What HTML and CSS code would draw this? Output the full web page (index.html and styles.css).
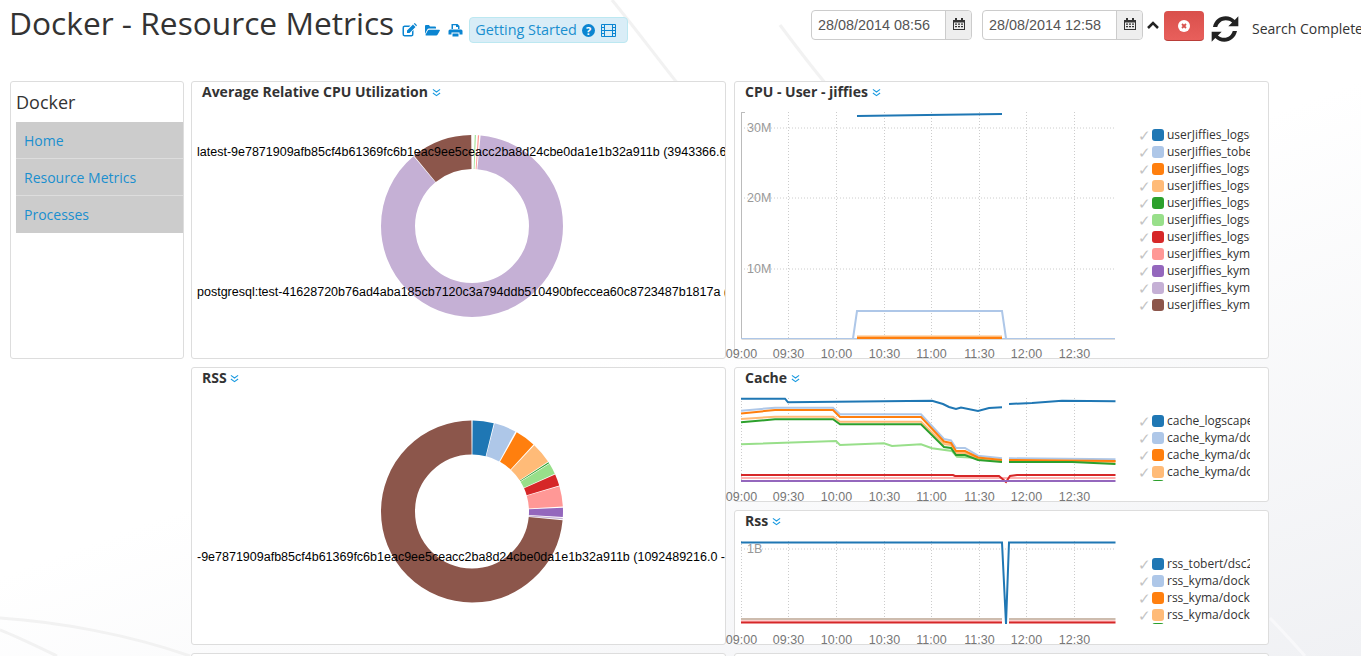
FILE: index.html
```html
<!DOCTYPE html>
<html lang="en">
<head>
    <meta charset="UTF-8">
    <title>Docker - Resource Metrics</title>
    <link rel="stylesheet" href="styles.css">
</head>
<body>
    <svg class="backdrop" viewBox="0 0 1361 656" aria-hidden="true">
        <path d="M612 0 C635 28 655 55 678 84" class="streak"/>
        <path d="M780 25 C795 45 810 65 826 84" class="streak"/>
        <path d="M0 618 C60 622 130 635 190 656" class="streak"/>
        <path d="M0 630 C20 638 40 648 57 656" class="streak"/>
        <path d="M1270 618 C1282 630 1293 643 1305 656" class="streak light"/>
    </svg>

    <header class="top-bar">
        <div class="title-group">
            <h1>Docker - Resource Metrics</h1>
            <div class="title-icons">
                <svg class="icon" viewBox="0 0 15 14"><path d="M2.500 2.500H8.500L7 4H3A.8.8 0 0 0 2 5V11A.8.8 0 0 0 3 12H9A.8.8 0 0 0 10 11V8.500L11.500 7V11A2.200 2.200 0 0 1 9.500 13.500H2.500A2.200 2.200 0 0 1 .5 11V5A2.200 2.200 0 0 1 2.500 2.500Z"/><path d="M5 7.500 11 1.500 13.500 4 7.500 10H5ZM11.800.8 12.800 0 15 2.200 14.200 3.200Z"/></svg>
                <svg class="icon" viewBox="0 0 15 14"><path d="M0 11V3A1 1 0 0 1 1 2H4L5 3.500H10A1 1 0 0 1 11 4.500V5.500H4A2 2 0 0 0 2.300 6.500Z"/><path d="M4 6.700H14.200A.7.7 0 0 1 14.800 7.700L12.500 11.800A1.500 1.500 0 0 1 11 12.500H1A.6.6 0 0 1 .5 11.700L2.800 7.500A1.400 1.400 0 0 1 4 6.700Z"/></svg>
                <svg class="icon" viewBox="0 0 15 14"><path d="M3.500 1H9.500L11.500 3V6H10V4H8V2.300H5V6H3.500Z"/><path d="M2 6.500H13A1.500 1.500 0 0 1 14.500 8V11.500H11.500V9.500H3.500V11.500H.5V8A1.500 1.500 0 0 1 2 6.500Z"/><path d="M4.500 10.500H10.500V13.500H4.500Z"/></svg>
            </div>
            <div class="getting-started">
                Getting Started
                <svg class="icon-help" viewBox="0 0 13 13"><circle cx="6.500" cy="6.500" r="6.500"/><text x="6.500" y="10.500">?</text></svg>
                <svg class="icon-film" viewBox="0 0 15 13"><path d="M.5.500h14v12H.5zM3.500.500v12M11.500.500v12M3.500 6.500h8M.5 3.500h3M.5 6.500h3M.5 9.500h3M11.500 3.500h3M11.500 6.500h3M11.500 9.500h3"/></svg>
            </div>
        </div>
        <div class="search-group">
            <div class="date-field">
                <span class="date-value">28/08/2014 08:56</span>
                <span class="date-addon"><svg class="icon-cal" viewBox="0 0 12 12"><path d="M0 2h2V0h2v2h4V0h2v2h2v10H0zM1 4.500V11h10V4.500z"/><path d="M2 5.500h2v1.300H2zM5 5.500h2v1.300H5zM8 5.500h2v1.300H8zM2 8h2v1.300H2zM5 8h2v1.300H5zM8 8h2v1.300H8z"/></svg></span>
            </div>
            <div class="date-field">
                <span class="date-value">28/08/2014 12:58</span>
                <span class="date-addon"><svg class="icon-cal" viewBox="0 0 12 12"><path d="M0 2h2V0h2v2h4V0h2v2h2v10H0zM1 4.500V11h10V4.500z"/><path d="M2 5.500h2v1.300H2zM5 5.500h2v1.300H5zM8 5.500h2v1.300H8zM2 8h2v1.300H2zM5 8h2v1.300H5zM8 8h2v1.300H8z"/></svg></span>
            </div>
            <svg class="icon-up" viewBox="0 0 12 8"><path d="M1 7 6 2l5 5" /></svg>
            <button class="stop-btn"><svg viewBox="0 0 12 12"><circle cx="6" cy="6" r="6" fill="#fff"/><path d="M4 4l4 4M8 4l-4 4" stroke="#d9534f" stroke-width="1.800"/></svg></button>
            <svg class="icon-refresh" viewBox="0 0 24 24"><path d="M3 10.500C4 5.500 8 2.500 12.500 2.500c2.800 0 5 1 6.800 2.800L22 2.500V10h-7.500l2.800-2.800C16 6 14.500 5.400 12.500 5.400 9.500 5.400 7 7.500 6.200 10.500zM21 13.500c-1 5-5 8-9.500 8-2.800 0-5-1-6.800-2.800L2 21.500V14h7.500l-2.800 2.800c1.300 1.200 2.800 1.800 4.800 1.800 3 0 5.500-2.100 6.300-5.100z"/></svg>
            <span class="search-status">Search Complete</span>
        </div>
    </header>

    <main class="layout">
        <nav class="side-nav">
            <h3>Docker</h3>
            <ul>
                <li><a href="#">Home</a></li>
                <li><a href="#">Resource Metrics</a></li>
                <li><a href="#">Processes</a></li>
            </ul>
        </nav>

        <div class="panels">
            <section class="panel tall">
                <h4>Average Relative CPU Utilization <svg class="icon-more" viewBox="0 0 10 10"><path d="M1 1.500l4 3 4-3M1 5.500l4 3 4-3"/></svg></h4>
                <svg class="pie" viewBox="0 0 533 250">
                    <g class="ring" transform="rotate(-90 280 119)">
                        <circle cx="280" cy="119" r="74" pathLength="360" stroke="#c5b0d5" stroke-dasharray="314.500 360" stroke-dashoffset="-5.500"/>
                        <circle cx="280" cy="119" r="74" pathLength="360" stroke="#8c564b" stroke-dasharray="39 360" stroke-dashoffset="-320.500"/>
                        <circle cx="280" cy="119" r="74" pathLength="360" stroke="#98df8a" stroke-dasharray="0.700 360" stroke-dashoffset="-1.800"/>
                        <circle cx="280" cy="119" r="74" pathLength="360" stroke="#ff9896" stroke-dasharray="0.800 360" stroke-dashoffset="-3.800"/>
                    </g>
                    <text x="5" y="49" class="pie-label">latest-9e7871909afb85cf4b61369fc6b1eac9ee5ceacc2ba8d24cbe0da1e1b32a911b (3943366.6</text>
                    <text x="5" y="189" class="pie-label">postgresql:test-41628720b76ad4aba185cb7120c3a794ddb510490bfeccea60c8723487b1817a (</text>
                </svg>
            </section>

            <section class="panel tall">
                <h4>CPU - User - jiffies <svg class="icon-more" viewBox="0 0 10 10"><path d="M1 1.500l4 3 4-3M1 5.500l4 3 4-3"/></svg></h4>
                <div class="chart-row">
                    <svg class="chart" viewBox="0 0 395 254">
                        <g class="grid">
                            <path d="M14.500 0V227M61.500 0V227M109.500 0V227M157.500 0V227M204.500 0V227M252.500 0V227M299.500 0V227M347.500 0V227"/>
                            <path d="M14 16H388M14 86H388M14 157H388"/>
                        </g>
                        <path class="axis" d="M18 .5H14.500V227H388"/>
                        <text x="20" y="20" class="tick">30M</text>
                        <text x="20" y="90" class="tick">20M</text>
                        <text x="20" y="161" class="tick">10M</text>
                        <path class="line thin" stroke="#aec7e8" d="M14 226.500H388"/>
                        <path class="line" stroke="#aec7e8" d="M126 226.500 130 199H275L279 226.500"/>
                        <path class="line" stroke="#ffbb78" d="M130 224.500H275"/>
                        <path class="line" stroke="#ff7f0e" d="M130 226H275"/>
                        <path class="line" stroke="#1f77b4" d="M130 4L200 3L275 2"/>
                        <g class="ticks-x">
                            <text x="14.500" y="246">09:00</text><text x="61.500" y="246">09:30</text><text x="109.500" y="246">10:00</text><text x="157.500" y="246">10:30</text><text x="204.500" y="246">11:00</text><text x="252.500" y="246">11:30</text><text x="299.500" y="246">12:00</text><text x="347.500" y="246">12:30</text>
                        </g>
                    </svg>
                    <ul class="legend">
                        <li><i>✓</i><b class="c1"></b><span>userJiffies_logscape</span></li>
                        <li><i>✓</i><b class="c2"></b><span>userJiffies_tobert</span></li>
                        <li><i>✓</i><b class="c3"></b><span>userJiffies_logscape</span></li>
                        <li><i>✓</i><b class="c4"></b><span>userJiffies_logscape</span></li>
                        <li><i>✓</i><b class="c5"></b><span>userJiffies_logscape</span></li>
                        <li><i>✓</i><b class="c6"></b><span>userJiffies_logscape</span></li>
                        <li><i>✓</i><b class="c7"></b><span>userJiffies_logscape</span></li>
                        <li><i>✓</i><b class="c8"></b><span>userJiffies_kyma/docker</span></li>
                        <li><i>✓</i><b class="c9"></b><span>userJiffies_kyma/docker</span></li>
                        <li><i>✓</i><b class="c10"></b><span>userJiffies_kyma/docker</span></li>
                        <li><i>✓</i><b class="c11"></b><span>userJiffies_kyma/docker</span></li>
                    </ul>
                </div>
            </section>

            <section class="panel tall">
                <h4>RSS <svg class="icon-more" viewBox="0 0 10 10"><path d="M1 1.500l4 3 4-3M1 5.500l4 3 4-3"/></svg></h4>
                <svg class="pie" viewBox="0 0 533 250">
                    <g class="ring" transform="rotate(-90 280 118.500)">
                        <circle cx="280" cy="118.500" r="74" pathLength="360" stroke="#1f77b4" stroke-dasharray="13.500 360" stroke-dashoffset="-.4"/>
                        <circle cx="280" cy="118.500" r="74" pathLength="360" stroke="#aec7e8" stroke-dasharray="14 360" stroke-dashoffset="-14.500"/>
                        <circle cx="280" cy="118.500" r="74" pathLength="360" stroke="#ff7f0e" stroke-dasharray="13 360" stroke-dashoffset="-29.500"/>
                        <circle cx="280" cy="118.500" r="74" pathLength="360" stroke="#ffbb78" stroke-dasharray="13.500 360" stroke-dashoffset="-43.200"/>
                        <circle cx="280" cy="118.500" r="74" pathLength="360" stroke="#2ca02c" stroke-dasharray=".7 360" stroke-dashoffset="-57.200"/>
                        <circle cx="280" cy="118.500" r="74" pathLength="360" stroke="#98df8a" stroke-dasharray="7 360" stroke-dashoffset="-58.400"/>
                        <circle cx="280" cy="118.500" r="74" pathLength="360" stroke="#d62728" stroke-dasharray="7.300 360" stroke-dashoffset="-66"/>
                        <circle cx="280" cy="118.500" r="74" pathLength="360" stroke="#ff9896" stroke-dasharray="13 360" stroke-dashoffset="-73.800"/>
                        <circle cx="280" cy="118.500" r="74" pathLength="360" stroke="#9467bd" stroke-dasharray="6 360" stroke-dashoffset="-87.600"/>
                        <circle cx="280" cy="118.500" r="74" pathLength="360" stroke="#c5b0d5" stroke-dasharray=".8 360" stroke-dashoffset="-94.200"/>
                        <circle cx="280" cy="118.500" r="74" pathLength="360" stroke="#8c564b" stroke-dasharray="264 360" stroke-dashoffset="-95.600"/>
                    </g>
                    <text x="5" y="168" class="pie-label">-9e7871909afb85cf4b61369fc6b1eac9ee5ceacc2ba8d24cbe0da1e1b32a911b (1092489216.0 -</text>
                </svg>
            </section>

            <div class="panel-stack">
                <section class="panel short">
                    <h4>Cache <svg class="icon-more" viewBox="0 0 10 10"><path d="M1 1.500l4 3 4-3M1 5.500l4 3 4-3"/></svg></h4>
                    <div class="chart-row">
                        <svg class="chart" viewBox="0 0 395 111">
                            <g class="grid"><path d="M14.500 0V83M61.500 0V83M109.500 0V83M157.500 0V83M204.500 0V83M252.500 0V83M299.500 0V83M347.500 0V83"/></g>
                            <path class="line" stroke="#ffb3b2" stroke-width="4" d="M14 80H388.500"/>
                            <path class="line" stroke="#d62728" d="M14 77H226L228 78H272L279 84 283 78 290 77H388.500"/>
                            <path class="line" stroke="#9467bd" d="M14 83H388.500"/>
                            <path class="line" stroke="#98df8a" d="M14 46.300 109 43 113 47 157 45.300 165 48 194 46.300 205 50.300 225 53 230 58.700 251 60 275 63M282 63H388.500"/>
                            <path class="line" stroke="#aec7e8" stroke-width="3" d="M14 12.700 48 9.700H106L113 16.300H194L217 41 224 42.300 229 50H238L251 57.700 275 60.300M282 60.300 388.500 61.300"/>
                            <path class="line" stroke="#ffbb78" stroke-width="3" d="M14 21 48 18.700H106L113 23.700H194L217 46 224 47 229 55H238L251 61 275 63M282 63 388.500 64"/>
                            <path class="line" stroke="#ff7f0e" d="M14 15.500 48 12H106L113 19H194L217 43.500 224 45 229 53H238L251 59.500 275 62M282 62 388.500 63"/>
                            <path class="line" stroke="#2ca02c" d="M14 24.300 48 21.300H106L113 26.300H194L217 49 224 50 229 57H238L251 62 275 64M282 64H345L388.500 66"/>
                            <path class="line" stroke="#1f77b4" d="M14 .7H58L61 4.300 205 2.700 216 6 222 9 229 11 234 9.500 251 13 262 10 275 9.300M282 6 305 5 335 2.700 388.500 3.300"/>
                            <g class="ticks-x">
                                <text x="14.500" y="103">09:00</text><text x="61.500" y="103">09:30</text><text x="109.500" y="103">10:00</text><text x="157.500" y="103">10:30</text><text x="204.500" y="103">11:00</text><text x="252.500" y="103">11:30</text><text x="299.500" y="103">12:00</text><text x="347.500" y="103">12:30</text>
                            </g>
                        </svg>
                        <ul class="legend legend-short">
                            <li><i>✓</i><b class="c1"></b><span>cache_logscape/docker</span></li>
                            <li><i>✓</i><b class="c2"></b><span>cache_kyma/docker</span></li>
                            <li><i>✓</i><b class="c3"></b><span>cache_kyma/docker</span></li>
                            <li><i>✓</i><b class="c4"></b><span>cache_kyma/docker</span></li>
                            <li><i></i><b class="c5"></b><span></span></li>
                        </ul>
                    </div>
                </section>

                <section class="panel short">
                    <h4>Rss <svg class="icon-more" viewBox="0 0 10 10"><path d="M1 1.500l4 3 4-3M1 5.500l4 3 4-3"/></svg></h4>
                    <div class="chart-row">
                        <svg class="chart" viewBox="0 0 395 111">
                            <g class="grid"><path d="M14.500 0V83M61.500 0V83M109.500 0V83M157.500 0V83M204.500 0V83M252.500 0V83M299.500 0V83M347.500 0V83"/><path d="M14 8H388"/></g>
                            <text x="20" y="12" class="tick">1B</text>
                            <path class="line" stroke="#cdbcae" d="M14 78H275M282 78H388.500"/>
                            <path class="line thin" stroke="#ff9896" d="M14 80H275M282 80H388.500"/>
                            <path class="line" stroke="#d62728" d="M14 81.500H275M282 81.500H388.500"/>
                            <path class="line" stroke="#1f77b4" d="M14 1.500H275L279 83 282 1.500H388.500"/>
                            <g class="ticks-x">
                                <text x="14.500" y="103">09:00</text><text x="61.500" y="103">09:30</text><text x="109.500" y="103">10:00</text><text x="157.500" y="103">10:30</text><text x="204.500" y="103">11:00</text><text x="252.500" y="103">11:30</text><text x="299.500" y="103">12:00</text><text x="347.500" y="103">12:30</text>
                            </g>
                        </svg>
                        <ul class="legend legend-short">
                            <li><i>✓</i><b class="c1"></b><span>rss_tobert/dsc2</span></li>
                            <li><i>✓</i><b class="c2"></b><span>rss_kyma/docker</span></li>
                            <li><i>✓</i><b class="c3"></b><span>rss_kyma/docker</span></li>
                            <li><i>✓</i><b class="c4"></b><span>rss_kyma/docker</span></li>
                            <li><i></i><b class="c5"></b><span></span></li>
                        </ul>
                    </div>
                </section>
            </div>

            <section class="panel tall"></section>
            <section class="panel tall"></section>
        </div>
    </main>
</body>
</html>
```

FILE: styles.css
```css
/* page */
html, body {
    height: 100%;
    overflow: hidden;
}

body {
    margin: 0;
    background: linear-gradient(160deg, #fff 50%, #f0f1f4 100%);
    color: #333;
    font-family: "Open Sans", sans-serif;
    font-size: 14px;
}

.backdrop {
    position: absolute;
    top: 0;
    left: 0;
    width: 1361px;
    height: 656px;
    z-index: -1;
}

.streak {
    fill: none;
    stroke: #f2f2f2;
    stroke-width: 3;
}

.streak.light {
    stroke: #f8f8fa;
}

/* header */
.top-bar {
    display: flex;
    justify-content: space-between;
    height: 81px;
    white-space: nowrap;
}

.title-group {
    display: flex;
    align-items: flex-start;
    padding-left: 9px;
}

h1 {
    margin: 2px 0 0;
    font-size: 31.7px;
    font-weight: 400;
    line-height: 42px;
}

.title-icons {
    display: flex;
    gap: 8px;
    margin: 23px 0 0 8px;
}

.icon {
    width: 15px;
    height: 14px;
    fill: #0b85d1;
}

.getting-started {
    display: flex;
    align-items: center;
    height: 22px;
    margin: 17px 0 0 6px;
    padding: 0 11px 2px 5px;
    border: 1px solid #bce8f1;
    border-radius: 4px;
    background-color: #d9edf7;
    color: #1a8fcf;
    font-size: 14.4px;
}

.icon-help {
    width: 13px;
    height: 13px;
    margin: 2px 0 0 5px;
    fill: #0b85d1;
}

.icon-help text {
    fill: #fff;
    font-size: 11px;
    font-weight: 700;
    text-anchor: middle;
}

.icon-film {
    width: 15px;
    height: 13px;
    margin: 2px 0 0 6px;
    fill: none;
    stroke: #0b85d1;
}

.search-group {
    display: flex;
    align-items: flex-start;
    width: 550px;
    padding-top: 10px;
    overflow: hidden;
}

.date-field {
    display: flex;
    flex: none;
    width: 159px;
    height: 28px;
    margin-right: 10px;
    border: 1px solid #ccc;
    border-radius: 4px;
    background-color: #fff;
}

.date-value {
    flex: 1;
    padding-left: 6px;
    color: #555;
    font-family: "Liberation Sans", sans-serif;
    font-size: 14.4px;
    line-height: 28px;
}

.date-addon {
    display: flex;
    justify-content: center;
    width: 26px;
    padding-top: 7px;
    box-sizing: border-box;
    border-left: 1px solid #ccc;
    border-radius: 0 4px 4px 0;
    background-color: #eee;
}

.icon-cal {
    width: 12px;
    height: 12px;
    fill: #333;
}

.icon-up {
    flex: none;
    width: 12px;
    height: 8px;
    margin: 11px 5px 0 -6px;
    fill: none;
    stroke: #222;
    stroke-width: 2.500;
}

.stop-btn {
    display: flex;
    flex: none;
    align-items: center;
    justify-content: center;
    width: 40px;
    height: 30px;
    margin: 1px 0 0;
    padding: 0;
    border: 0;
    border-bottom: 1px solid #b93d38;
    border-radius: 4px;
    background-image: linear-gradient(#d9504c, #e85f5b);
}

.stop-btn svg {
    width: 12px;
    height: 12px;
}

.icon-refresh {
    flex: none;
    width: 32px;
    height: 32px;
    margin: 3px 0 0 5px;
    fill: #222;
}

.search-status {
    margin: 9px 0 0 11px;
    font-size: 14px;
}

/* main area */
.layout {
    display: flex;
    align-items: flex-start;
    gap: 7px;
    padding-left: 10px;
}

.side-nav {
    width: 167px;
    height: 276px;
    padding-left: 5px;
    border: 1px solid #ddd;
    border-radius: 3px;
    background-color: #fff;
}

.side-nav h3 {
    margin: 0;
    padding: 4px 0 4px;
    font-size: 18px;
    font-weight: 400;
    line-height: 32px;
}

.side-nav ul {
    margin: 0;
    padding: 0;
    list-style: none;
}

.side-nav li {
    height: 37px;
    box-sizing: border-box;
    border-bottom: 1px solid #ddd;
    background-color: #ccc;
}

.side-nav li:last-child {
    border-bottom: 0;
}

.side-nav a {
    display: block;
    padding-left: 8px;
    color: #1a8fcf;
    line-height: 37px;
    text-decoration: none;
}

.panels {
    display: grid;
    grid-template-columns: 535px 535px;
    gap: 8px;
}

.panel {
    box-sizing: border-box;
    border: 1px solid #ddd;
    border-radius: 3px;
    background-color: #fff;
}

.tall {
    height: 278px;
}

.short {
    height: 135px;
}

.panel-stack {
    display: flex;
    flex-direction: column;
    gap: 8px;
}

.panel h4 {
    margin: 0;
    padding-left: 10px;
    font-size: 14px;
    font-weight: 700;
    line-height: 20px;
}

.icon-more {
    width: 9px;
    height: 9px;
    fill: none;
    stroke: #1a9ae0;
    stroke-width: 1.200;
}

/* pies */
.pie {
    display: block;
    width: 533px;
    height: 250px;
    margin-top: 5px;
}

.ring circle {
    fill: none;
    stroke-width: 34;
}

.pie-label {
    fill: #000;
    font-family: "Liberation Sans", sans-serif;
    font-size: 12.5px;
}

/* line charts */
.chart-row {
    display: flex;
    align-items: flex-start;
}

.chart {
    flex: none;
    width: 395px;
    margin: 10px 0 0 -8px;
    overflow: visible;
}

.tall .chart {
    height: 254px;
}

.short .chart {
    height: 111px;
}

.grid path {
    fill: none;
    stroke: #ccc;
    stroke-dasharray: 1 2;
}

.axis {
    fill: none;
    stroke: #bbb;
}

.tick {
    fill: #999;
    font-family: "Liberation Sans", sans-serif;
    font-size: 12.5px;
}

.ticks-x text {
    fill: #777;
    font-family: "Liberation Sans", sans-serif;
    font-size: 12.5px;
    text-anchor: middle;
}

.line {
    fill: none;
    stroke-width: 2;
}

.line.thin {
    stroke-width: 1;
}

.legend {
    width: 112px;
    height: 188px;
    margin: 24px 0 0 16px;
    padding: 0;
    list-style: none;
    overflow: hidden;
}

.legend-short {
    height: 69px;
}

.legend li {
    display: flex;
    align-items: center;
    height: 17px;
    white-space: nowrap;
    font-size: 12px;
}

.legend-short li:last-child {
    height: 12px;
}

.legend i {
    flex: none;
    width: 14px;
    color: #c4c4c4;
    font-style: normal;
    font-size: 15px;
}

.legend b {
    flex: none;
    width: 12px;
    height: 12px;
    margin-right: 3px;
    border-radius: 3px;
}

.c1 { background-color: #1f77b4; }
.c2 { background-color: #aec7e8; }
.c3 { background-color: #ff7f0e; }
.c4 { background-color: #ffbb78; }
.c5 { background-color: #2ca02c; }
.c6 { background-color: #98df8a; }
.c7 { background-color: #d62728; }
.c8 { background-color: #ff9896; }
.c9 { background-color: #9467bd; }
.c10 { background-color: #c5b0d5; }
.c11 { background-color: #8c564b; }
```
